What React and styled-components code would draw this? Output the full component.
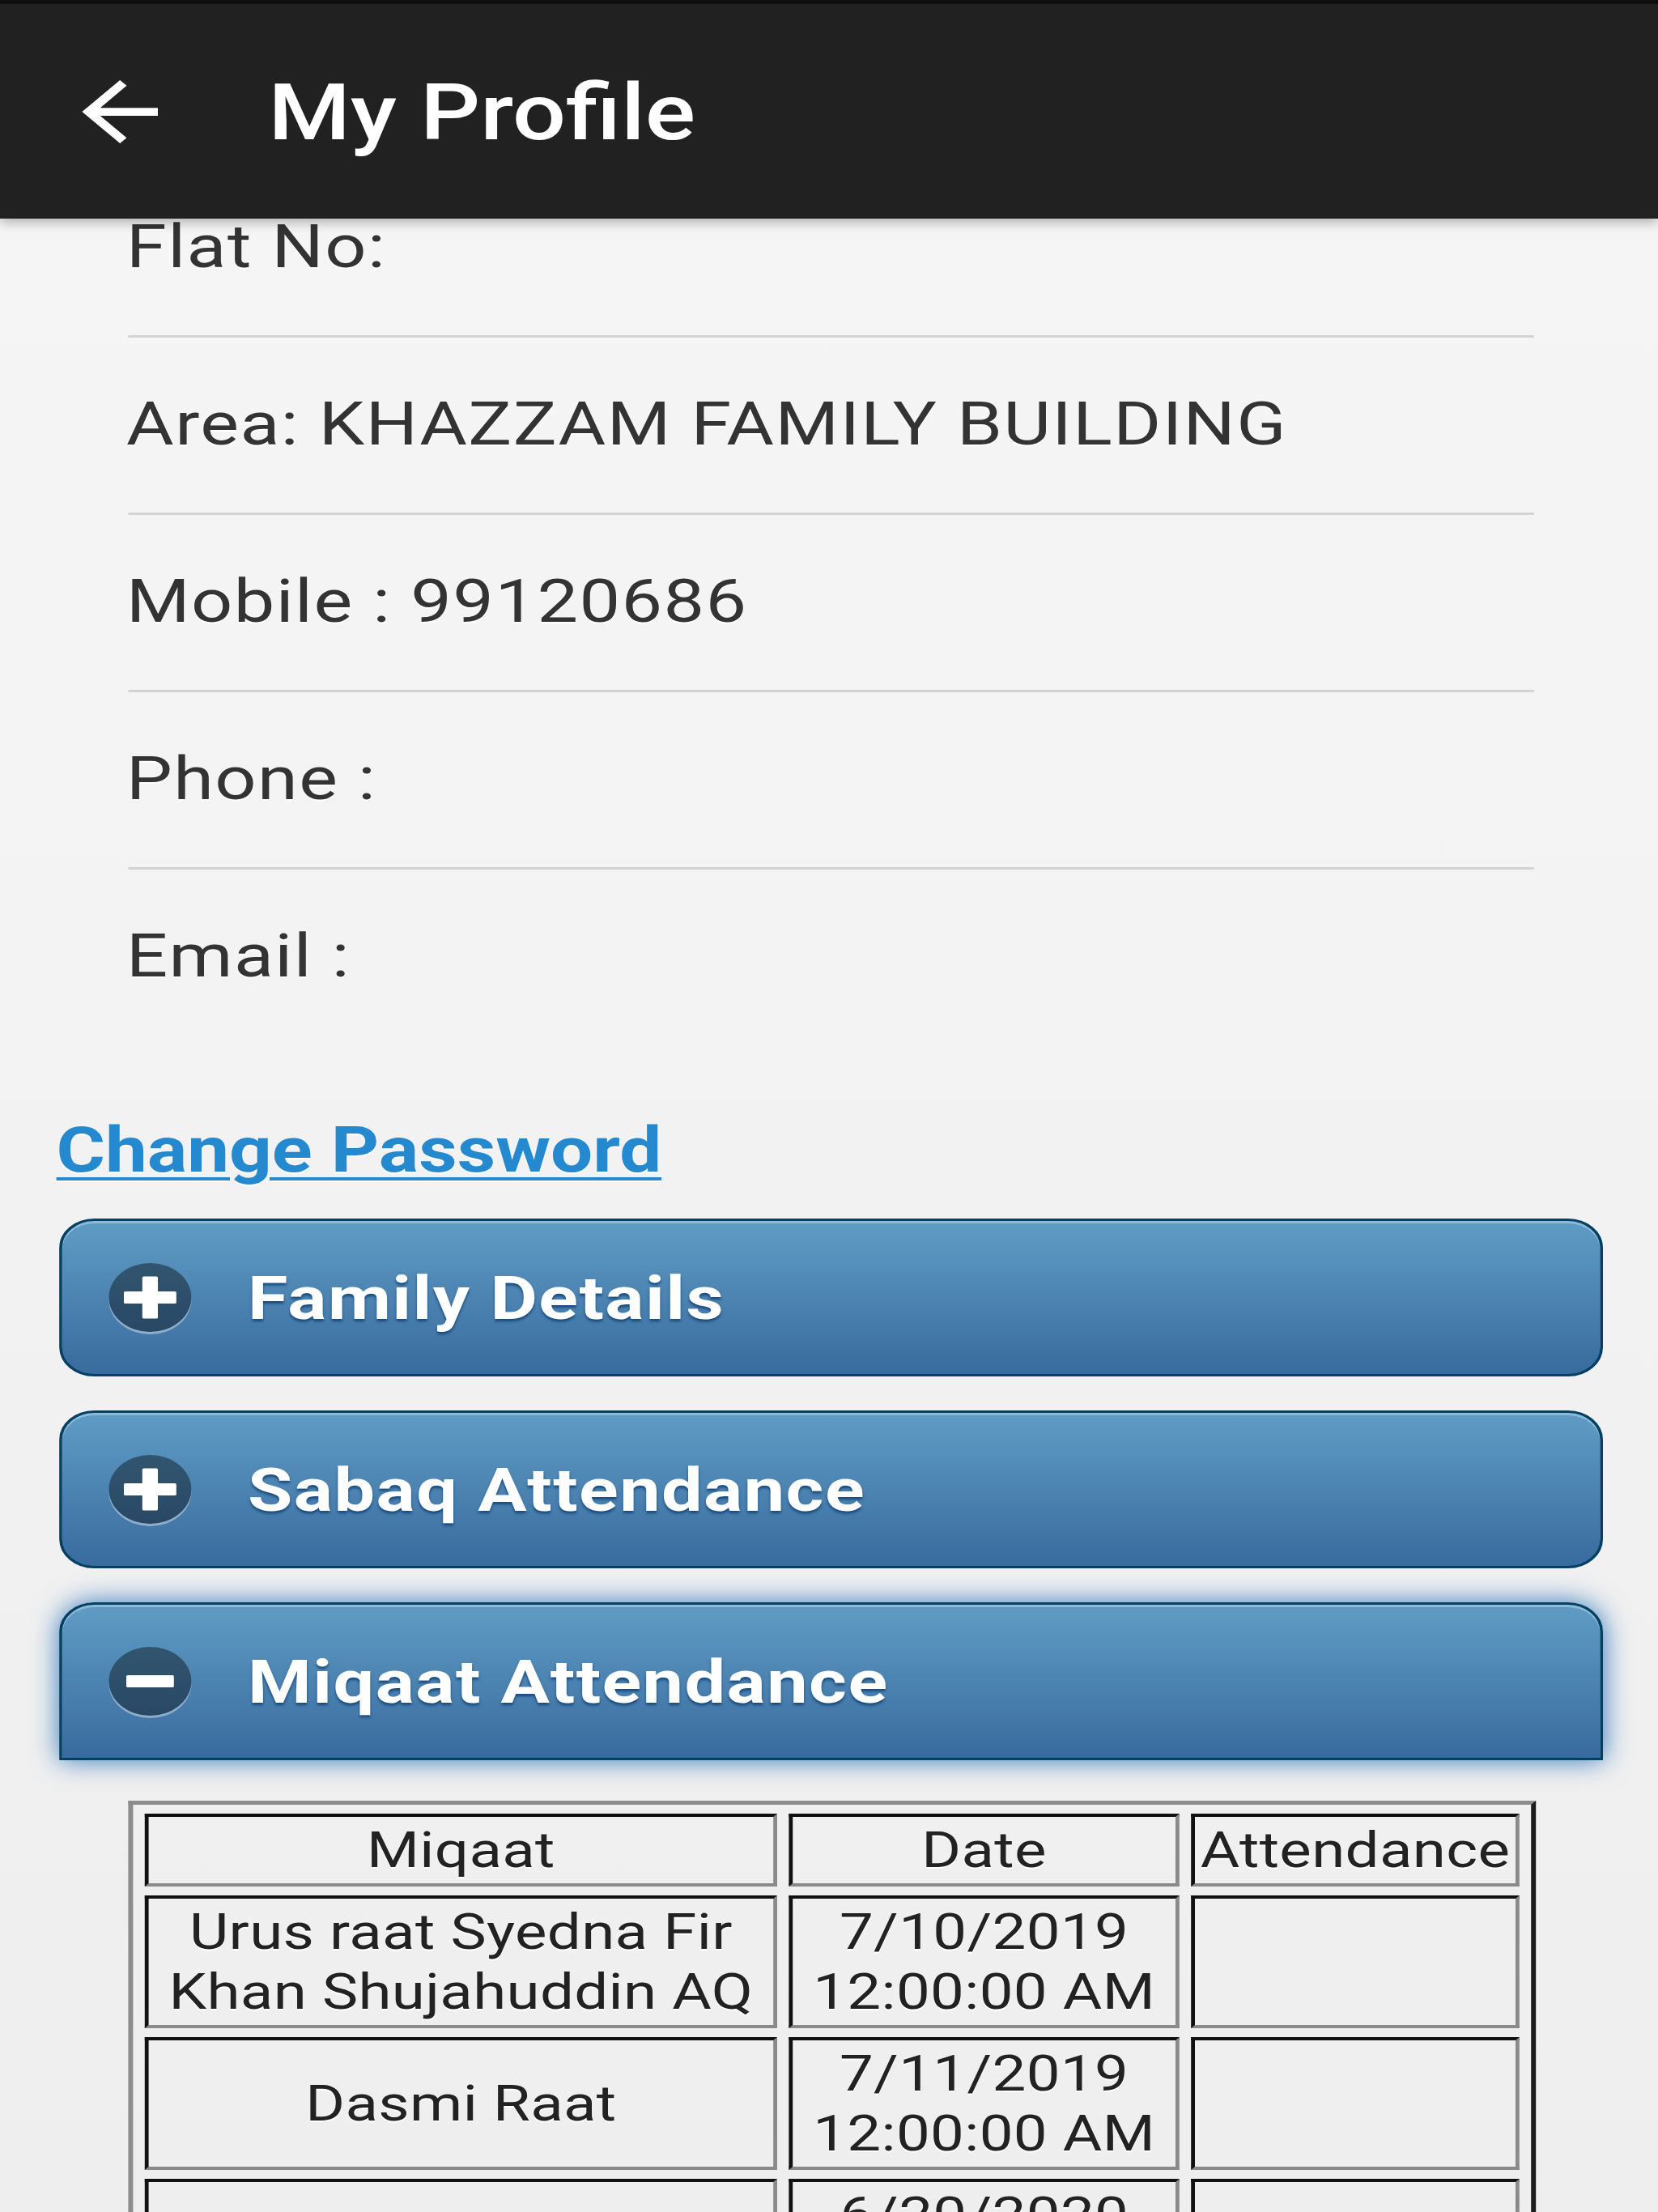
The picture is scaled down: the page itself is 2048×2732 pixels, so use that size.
import React from 'react';
import styled, { createGlobalStyle } from 'styled-components';

/* The reference is a capture that was stretched horizontally by ~1.2,
   so the page is laid out at 2048/1.2 px and widened back with scaleX. */
const STRETCH = 1.2;
const PAGE_W = 2048 / STRETCH;

const GlobalStyle = createGlobalStyle`
  html, body { margin: 0; padding: 0; }
  body {
    background: #f1f1f1;
    font-family: Roboto, "Noto Sans", "Liberation Sans", Arial, sans-serif;
    overflow-x: hidden;
  }
`;

const Stage = styled.div`
  width: ${PAGE_W}px;
  min-height: 2732px;
  transform: scaleX(${STRETCH});
  transform-origin: 0 0;
  background: linear-gradient(#f6f6f6, #eeeeee);
`;

const AppBar = styled.header`
  position: relative;
  z-index: 2;
  height: 270px;
  box-sizing: border-box;
  border-top: 5px solid #0e0e0e;
  background: #212121;
  display: flex;
  align-items: center;
  padding-left: 84px;
  box-shadow: 0 5px 12px rgba(0, 0, 0, 0.28);
`;

const BackButton = styled.button`
  display: flex;
  width: 79px;
  height: 78px;
  padding: 0;
  border: 0;
  background: none;
  color: #fff;
  cursor: pointer;
`;

const Title = styled.h1`
  margin: 4px 0 0 113px;
  font-family: Roboto, "Noto Sans", sans-serif;
  font-weight: 500;
  font-size: 97px;
  line-height: 1;
  color: #fff;
`;

const InfoList = styled.ul`
  position: relative;
  z-index: 1;
  list-style: none;
  margin: -72px 0 0;
  padding: 0 ${PAGE_W - 1579}px 0 132px;
`;

const InfoItem = styled.li`
  padding: 62px 0 66px;
  font-size: 75px;
  line-height: 88px;
  letter-spacing: 1.2px;
  color: #333;
  text-indent: -2px;
  text-shadow: 0 2px 1px #fff;
  border-bottom: 3px solid #d3d3d3;

  &:last-child {
    border-bottom: 0;
  }
`;

const LinkRow = styled.div`
  padding: 86px 0 0 58px;
  font-size: 77px;
  line-height: 90px;
`;

const PasswordLink = styled.a`
  font-weight: 700;
  color: #2489ce;
  text-decoration: underline;
  text-decoration-thickness: 4px;
  text-underline-offset: 7px;
  text-shadow: 0 2px 1px #fff;
`;

const CollapsibleSet = styled.div`
  margin-top: 39px;
  padding: 0 ${PAGE_W - 1649.7}px 0 61px;
`;

const Collapsible = styled.section`
  margin-bottom: 42px;
`;

const Heading = styled.button`
  display: flex;
  align-items: center;
  width: 100%;
  height: 195px;
  box-sizing: border-box;
  padding: 0 0 0 48px;
  border: 3px solid #044062;
  border-radius: ${(p) => (p.$open ? '36px 36px 0 0' : '36px')};
  background: linear-gradient(#5f9cc5, #396b9e);
  box-shadow: inset 0 3px 0 rgba(255, 255, 255, 0.3)
    ${(p) => (p.$open ? ', 0 0 30px #387bbe' : '')};
  color: #fff;
  font-family: Roboto, "Noto Sans", sans-serif;
  font-weight: 700;
  font-size: 75px;
  line-height: 88px;
  letter-spacing: 1.2px;
  text-align: left;
  white-space: nowrap;
  text-shadow: 0 3px 3px #194b7e;
  cursor: pointer;
`;

const HeadingText = styled.span`
  flex: 1;
`;

const Disk = styled.span`
  display: flex;
  flex: none;
  width: 85px;
  height: 85px;
  margin-right: 58px;
  border-radius: 50%;
  background: rgba(0, 0, 0, 0.4);
  box-shadow: 0 3px 0 rgba(255, 255, 255, 0.4);
`;

const Content = styled.div`
  padding: 50px 70px 0 71px;
`;

const Grid = styled.table`
  width: 100%;
  table-layout: fixed;
  border-collapse: separate;
  border-spacing: 12px 11px;
  border: 5px solid;
  border-color: #8c8c8c #1c1c1c #1c1c1c #8c8c8c;
  font-size: 62px;
  line-height: 74px;
  letter-spacing: 0.3px;
  color: #222;
  text-shadow: 0 2px 0 #fff;
`;

const cellBase = `
  box-sizing: border-box;
  padding: 4px 2px;
  border: 4px solid;
  border-color: #111 #8a8a8a #8a8a8a #111;
  text-align: center;
  vertical-align: middle;
`;

const HeadCell = styled.th`
  ${cellBase}
  width: ${(p) => p.$w}px;
  font-weight: 400;
`;

const Cell = styled.td`
  ${cellBase}
`;

const ArrowBack = () => (
  <svg width="79" height="78" viewBox="4 4 16 16" fill="currentColor" aria-hidden="true">
    <path d="M20 11H7.83l5.59-5.59L12 4l-8 8 8 8 1.41-1.41L7.83 13H20v-2z" />
  </svg>
);

const PlusMinus = ({ open }) => (
  <svg width="85" height="85" viewBox="0 0 85 85" fill="#fff" aria-hidden="true">
    {open ? (
      <rect x="18" y="35" width="49" height="15" rx="1.5" />
    ) : (
      <>
        <rect x="15.5" y="35" width="54" height="15" rx="1.5" />
        <rect x="34.5" y="16.5" width="16" height="52" rx="1.5" />
      </>
    )}
  </svg>
);

const info = [
  'Flat No:',
  'Area: KHAZZAM FAMILY BUILDING',
  'Mobile : 99120686',
  'Phone :',
  'Email :',
];

const sections = [
  { title: 'Family Details', open: false },
  { title: 'Sabaq Attendance', open: false },
  { title: 'Miqaat Attendance', open: true },
];

const rows = [
  { name: ['Urus raat Syedna Fir', 'Khan Shujahuddin AQ'], date: ['7/10/2019', '12:00:00 AM'] },
  { name: ['Dasmi Raat'], date: ['7/11/2019', '12:00:00 AM'] },
  { name: [], date: ['6/20/2020', '12:00:00 AM'] },
];

const Lines = ({ lines }) =>
  lines.map((l, i) => (
    <React.Fragment key={i}>
      {i > 0 && <br />}
      {l}
    </React.Fragment>
  ));

export default function App() {
  return (
    <>
      <GlobalStyle />
      <Stage>
        <AppBar>
          <BackButton aria-label="Back">
            <ArrowBack />
          </BackButton>
          <Title>My Profile</Title>
        </AppBar>

        <InfoList>
          {info.map((t) => (
            <InfoItem key={t}>{t}</InfoItem>
          ))}
        </InfoList>

        <LinkRow>
          <PasswordLink href="#">Change Password</PasswordLink>
        </LinkRow>

        <CollapsibleSet>
          {sections.map((s) => (
            <Collapsible key={s.title}>
              <Heading $open={s.open}>
                <Disk>
                  <PlusMinus open={s.open} />
                </Disk>
                <HeadingText>{s.title}</HeadingText>
              </Heading>
              {s.open && (
                <Content>
                  <Grid>
                    <thead>
                      <tr>
                        <HeadCell $w={651}>Miqaat</HeadCell>
                        <HeadCell $w={402}>Date</HeadCell>
                        <HeadCell $w={338}>Attendance</HeadCell>
                      </tr>
                    </thead>
                    <tbody>
                      {rows.map((r, i) => (
                        <tr key={i}>
                          <Cell>
                            <Lines lines={r.name} />
                          </Cell>
                          <Cell>
                            <Lines lines={r.date} />
                          </Cell>
                          <Cell />
                        </tr>
                      ))}
                    </tbody>
                  </Grid>
                </Content>
              )}
            </Collapsible>
          ))}
        </CollapsibleSet>
      </Stage>
    </>
  );
}
